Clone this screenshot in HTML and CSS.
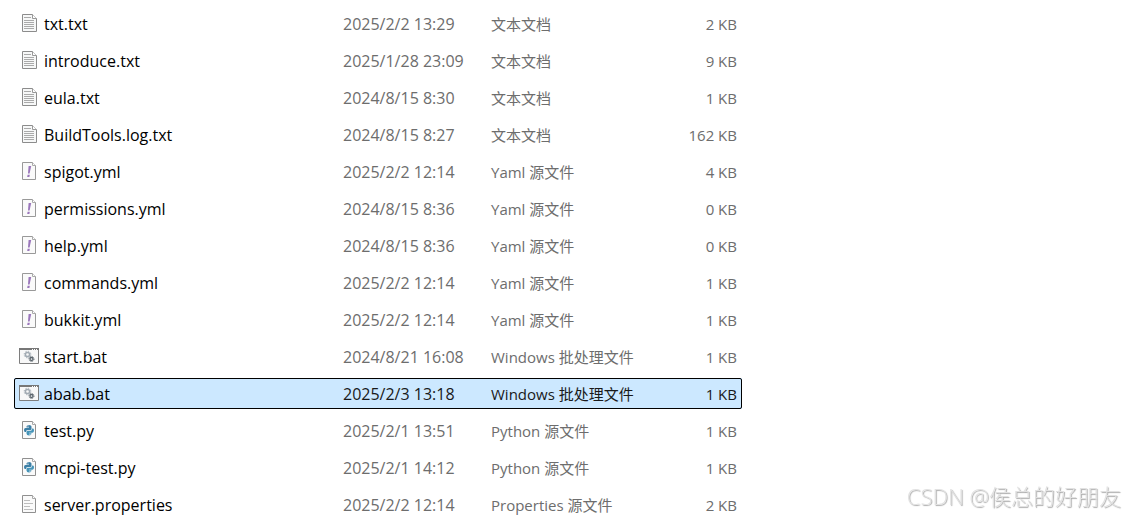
FILE: index.html
```
<!DOCTYPE html>
<html lang="zh-CN">
<head>
<meta charset="utf-8">
<title>文件列表</title>
<link rel="stylesheet" href="styles.css">
</head>
<body>
<svg class="sprite" aria-hidden="true">
  <symbol id="txt" viewBox="0 0 20 20">
    <path d="M3.500 1.500H13.500L17.500 5.500V18.500H3.500Z" fill="#f7f8f8" stroke="#8c8c8c"/>
    <path d="M13.500 1.500V5.500H17.500" fill="#fff" stroke="#999"/>
    <path d="M5 4.500h7M5 7.500h10M5 9.500h10M5 11.500h10M5 13.500h10M5 15.500h10" stroke="#aaa"/>
  </symbol>
  <symbol id="yml" viewBox="0 0 20 20">
    <path d="M3.500 1.500H13.500L16.500 4.500V18.500H3.500Z" fill="#fafafa" stroke="#999"/>
    <path d="M13.500 1.500V4.500H16.500" fill="#fff" stroke="#aaa"/>
    <path d="M9.600 5H12.200L10.600 12.500H9Z" fill="#9a76bb"/>
    <path d="M8.600 13.700H10.800L10.400 16H8.200Z" fill="#9a76bb"/>
  </symbol>
  <symbol id="bat" viewBox="0 0 20 20">
    <path d="M.5 2.500H19.500V17.500H.5Z" fill="#f8f8f8" stroke="#7e7e7e"/>
    <path d="M0 3H20" stroke="#777" stroke-width="2"/>
    <path d="M13 3.500h1M15 3.500h1M17 3.500h1" stroke="#fff"/>
    <circle cx="8.500" cy="8.500" r="2.100" fill="none" stroke="#a2abb3" stroke-width="1.500"/>
    <circle cx="8.500" cy="8.500" r="3.300" fill="none" stroke="#a2abb3" stroke-dasharray="1.300 1.290"/>
    <circle cx="12.500" cy="13" r="1.500" fill="none" stroke="#59636b" stroke-width="1.300"/>
    <circle cx="12.500" cy="13" r="2.500" fill="none" stroke="#59636b" stroke-dasharray="1 .96"/>
  </symbol>
  <symbol id="py" viewBox="0 0 20 20">
    <path d="M3.500 1.500H13.500L16.500 4.500V18.500H3.500Z" fill="#fafafa" stroke="#909090"/>
    <path d="M13.500 1.500V4.500H16.500" fill="#fff" stroke="#aaa"/>
    <path d="M7.500 6.500Q7.500 5 10 5T12.500 6.500V9Q12.500 10 11.500 10H8.500Q7 10 7 12H6Q5 12 5 10T6.500 8H10V7.500H7.500Z" fill="#3c7fa6"/>
    <path d="M12.500 13.500Q12.500 15.500 10 15.500T7.500 13.500V12Q7.500 10.700 8.700 10.700H11.500Q13.200 10.700 13.200 8.500H14Q15 8.500 15 10.500T13.500 12.700H10V13.200H12.500Z" fill="#4594b8"/>
    <path d="M8.500 6h1M10.500 14.500h1" stroke="#fff" stroke-width=".8"/>
  </symbol>
  <symbol id="props" viewBox="0 0 20 20">
    <path d="M3.500 1.500H13.500L16.500 4.500V18.500H3.500Z" fill="#fafafa" stroke="#909090"/>
    <path d="M13.500 1.500V4.500H16.500" fill="#fff" stroke="#aaa"/>
    <path d="M5 6.500h6M5 9.500h9M5 12.500h6M5 15.500h9" stroke="#bdbdbd"/>
  </symbol>
</svg>
<table class="files">
  <colgroup><col class="col-name"><col class="col-date"><col class="col-type"><col class="col-size"></colgroup>
  <tbody>
    <tr><td><span class="name"><svg class="icon"><use href="#txt"/></svg>txt.txt</span></td><td class="date">2025/2/2 13:29</td><td>文本文档</td><td class="size">2 KB</td></tr>
    <tr><td><span class="name"><svg class="icon"><use href="#txt"/></svg>introduce.txt</span></td><td class="date">2025/1/28 23:09</td><td>文本文档</td><td class="size">9 KB</td></tr>
    <tr><td><span class="name"><svg class="icon"><use href="#txt"/></svg>eula.txt</span></td><td class="date">2024/8/15 8:30</td><td>文本文档</td><td class="size">1 KB</td></tr>
    <tr><td><span class="name"><svg class="icon"><use href="#txt"/></svg>BuildTools.log.txt</span></td><td class="date">2024/8/15 8:27</td><td>文本文档</td><td class="size">162 KB</td></tr>
    <tr><td><span class="name"><svg class="icon"><use href="#yml"/></svg>spigot.yml</span></td><td class="date">2025/2/2 12:14</td><td>Yaml 源文件</td><td class="size">4 KB</td></tr>
    <tr><td><span class="name"><svg class="icon"><use href="#yml"/></svg>permissions.yml</span></td><td class="date">2024/8/15 8:36</td><td>Yaml 源文件</td><td class="size">0 KB</td></tr>
    <tr><td><span class="name"><svg class="icon"><use href="#yml"/></svg>help.yml</span></td><td class="date">2024/8/15 8:36</td><td>Yaml 源文件</td><td class="size">0 KB</td></tr>
    <tr><td><span class="name"><svg class="icon"><use href="#yml"/></svg>commands.yml</span></td><td class="date">2025/2/2 12:14</td><td>Yaml 源文件</td><td class="size">1 KB</td></tr>
    <tr><td><span class="name"><svg class="icon"><use href="#yml"/></svg>bukkit.yml</span></td><td class="date">2025/2/2 12:14</td><td>Yaml 源文件</td><td class="size">1 KB</td></tr>
    <tr><td><span class="name"><svg class="icon"><use href="#bat"/></svg>start.bat</span></td><td class="date">2024/8/21 16:08</td><td>Windows 批处理文件</td><td class="size">1 KB</td></tr>
    <tr class="selected"><td><span class="name"><svg class="icon"><use href="#bat"/></svg>abab.bat</span></td><td class="date">2025/2/3 13:18</td><td>Windows 批处理文件</td><td class="size">1 KB</td></tr>
    <tr><td><span class="name"><svg class="icon"><use href="#py"/></svg>test.py</span></td><td class="date">2025/2/1 13:51</td><td>Python 源文件</td><td class="size">1 KB</td></tr>
    <tr><td><span class="name"><svg class="icon"><use href="#py"/></svg>mcpi-test.py</span></td><td class="date">2025/2/1 14:12</td><td>Python 源文件</td><td class="size">1 KB</td></tr>
    <tr><td><span class="name"><svg class="icon"><use href="#props"/></svg>server.properties</span></td><td class="date">2025/2/2 12:14</td><td>Properties 源文件</td><td class="size">2 KB</td></tr>
  </tbody>
</table>
<div class="watermark">CSDN @侯总的好朋友</div>
</body>
</html>
```
FILE: styles.css
```
body {
  margin: 0;
  padding: 2px 14px 0;
  background: #fff;
  color: #6d6d6d;
  font: 15px/20px "Open Sans", "Noto Sans CJK SC", sans-serif;
  overflow: hidden;
}

.sprite {
  display: none;
}

.files {
  width: 100%;
  max-width: 728px;
  table-layout: fixed;
  border-spacing: 0 6px;
}

.col-date {
  width: 148px;
}

.col-type {
  width: 160px;
}

.col-size {
  width: 91px;
}

td {
  height: 31px;
  padding: 0;
  white-space: nowrap;
}

.date,
.name {
  font-size: 16px;
}

.size {
  padding-right: 5px;
  text-align: right;
}

.name {
  display: flex;
  align-items: center;
  gap: 5px;
  padding-left: 5px;
  color: #000;
}

.icon {
  width: 20px;
  height: 20px;
  margin-bottom: 2px;
}

.selected {
  background: #cce8ff;
  color: #191919;
  outline: 1px solid #000;
  outline-offset: -1px;
  border-radius: 2px;
}

.watermark {
  position: fixed;
  right: 4px;
  bottom: 4px;
  color: #e2e2e2;
  font-size: 22px;
  font-weight: 300;
  line-height: 32px;
  text-shadow: 1px 1px 1px #aaa;
}
```
